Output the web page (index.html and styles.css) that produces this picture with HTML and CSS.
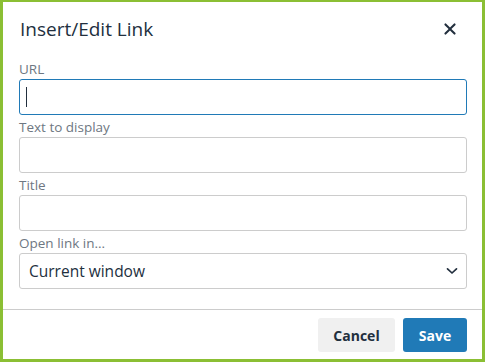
FILE: index.html
```html
<!DOCTYPE html>
<html lang="en">
<head>
  <meta charset="UTF-8" />
  <title>Insert/Edit Link</title>
  <link rel="stylesheet" href="styles.css">
</head>
<body>
  <div class="dialog">
    <div class="header">
      <div class="title">Insert/Edit Link</div>
      <button class="close" title="Close">
        <svg width="24" height="24" viewBox="0 0 24 24"><path d="M17.3 8.2L13.4 12l3.9 3.8a1 1 0 0 1-1.5 1.5L12 13.4l-3.8 3.9a1 1 0 0 1-1.5-1.5l3.9-3.8-3.9-3.8a1 1 0 0 1 1.5-1.5l3.8 3.9 3.8-3.9a1 1 0 0 1 1.5 1.5z"/></svg>
      </button>
    </div>

    <div class="content">
      <div class="group">
        <label>URL</label>
        <div class="input-wrap">
          <input class="input focused" type="text">
          <span class="caret"></span>
        </div>
      </div>
      <div class="group">
        <label>Text to display</label>
        <input class="input" type="text">
      </div>
      <div class="group">
        <label>Title</label>
        <input class="input" type="text">
      </div>
      <div class="group">
        <label>Open link in...</label>
        <div class="select">
          <span>Current window</span>
          <svg width="12" height="8" viewBox="0 0 12 8"><polyline points="1.5,1.8 6,6 10.5,1.8" fill="none" stroke="#222f3e" stroke-width="1.7" stroke-linecap="round" stroke-linejoin="round"/></svg>
        </div>
      </div>
    </div>

    <div class="footer">
      <button class="btn btn-secondary">Cancel</button>
      <button class="btn btn-primary">Save</button>
    </div>
  </div>
</body>
</html>
```

FILE: styles.css
```css
body {
  margin: 0;
  background: #fff;
  font-family: 'Open Sans', 'Noto Sans', sans-serif;
  color: #222f3e;
}
.dialog {
  width: 485px;
  height: 362px;
  box-sizing: border-box;
  border: 3px solid #8bbf34;
  border-top-width: 2px;
  display: flex;
  flex-direction: column;
  background: #fff;
}
.header {
  display: flex;
  align-items: center;
  justify-content: space-between;
  height: 58px;
  box-sizing: border-box;
  padding: 0 20px 4px 17px;
}
.title {
  font-size: 19px;
  line-height: 26px;
  color: #222f3e;
}
.close {
  border: none;
  background: none;
  padding: 0;
  width: 24px;
  height: 24px;
  cursor: pointer;
}
.close svg {
  display: block;
  fill: #222f3e;
}
.content {
  flex: 1;
  padding: 0 15px 0 16px;
  display: flex;
  flex-direction: column;
  gap: 3px;
}
.group label {
  display: block;
  font-size: 13.5px;
  line-height: 18px;
  margin-bottom: 1px;
  color: #6e7782;
}
.input-wrap {
  position: relative;
}
.input {
  display: block;
  width: 100%;
  height: 36px;
  box-sizing: border-box;
  border: 1px solid #cccccc;
  border-radius: 3px;
  padding: 0 9px;
  font-family: inherit;
  font-size: 16px;
  outline: none;
}
.input.focused {
  border-color: #207ab7;
}
.caret {
  position: absolute;
  left: 7px;
  top: 8px;
  width: 1px;
  height: 20px;
  background: #222f3e;
}
.select {
  display: flex;
  align-items: center;
  justify-content: space-between;
  height: 36px;
  box-sizing: border-box;
  border: 1px solid #cccccc;
  border-radius: 3px;
  padding: 0 8px 0 9px;
  font-size: 15.5px;
  color: #222f3e;
}
.select svg {
  display: block;
}
.footer {
  display: flex;
  justify-content: flex-end;
  gap: 8px;
  border-top: 1px solid #cccccc;
  padding: 8px 15px 7px;
}
.btn {
  height: 34px;
  border: none;
  border-radius: 3px;
  font-family: inherit;
  font-size: 14px;
  font-weight: bold;
  cursor: pointer;
}
.btn-secondary {
  width: 77px;
  background: #f0f0f0;
  color: #222f3e;
}
.btn-primary {
  width: 64px;
  background: #207ab7;
  color: #fff;
}
```
